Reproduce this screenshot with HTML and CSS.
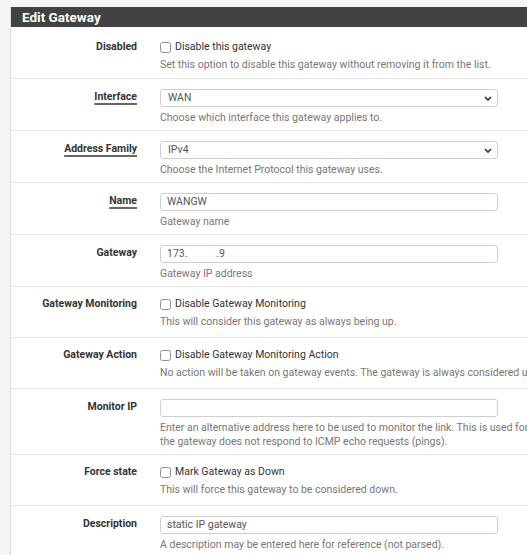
FILE: index.html
```html
<!DOCTYPE html>
<html>
<head>
<meta charset="utf-8">
<link rel="stylesheet" href="styles.css">
</head>
<body>
<div class="page">
  <div class="panel">
    <div class="panel-heading">Edit Gateway</div>
    <div class="panel-body">

      <div class="row row-check first">
        <div class="label">Disabled</div>
        <div class="field">
          <label class="check"><input type="checkbox"><span>Disable this gateway</span></label>
          <div class="help">Set this option to disable this gateway without removing it from the list.</div>
        </div>
      </div>

      <div class="row row-input">
        <div class="label"><span class="req">Interface</span></div>
        <div class="field">
          <div class="select">
            <span>WAN</span>
            <svg class="chev" width="8" height="5" viewBox="0 0 8 5"><path d="M1 1 L4 4 L7 1" fill="none" stroke="#333" stroke-width="1.7"/></svg>
          </div>
          <div class="help">Choose which interface this gateway applies to.</div>
        </div>
      </div>

      <div class="row row-input">
        <div class="label"><span class="req">Address Family</span></div>
        <div class="field">
          <div class="select">
            <span>IPv4</span>
            <svg class="chev" width="8" height="5" viewBox="0 0 8 5"><path d="M1 1 L4 4 L7 1" fill="none" stroke="#333" stroke-width="1.7"/></svg>
          </div>
          <div class="help">Choose the Internet Protocol this gateway uses.</div>
        </div>
      </div>

      <div class="row row-input">
        <div class="label"><span class="req">Name</span></div>
        <div class="field">
          <div class="input">WANGW</div>
          <div class="help">Gateway name</div>
        </div>
      </div>

      <div class="row row-input">
        <div class="label">Gateway</div>
        <div class="field">
          <div class="input">173.           .9</div>
          <div class="help">Gateway IP address</div>
        </div>
      </div>

      <div class="row row-check">
        <div class="label">Gateway Monitoring</div>
        <div class="field">
          <label class="check"><input type="checkbox"><span>Disable Gateway Monitoring</span></label>
          <div class="help">This will consider this gateway as always being up.</div>
        </div>
      </div>

      <div class="row row-check">
        <div class="label">Gateway Action</div>
        <div class="field">
          <label class="check"><input type="checkbox"><span>Disable Gateway Monitoring Action</span></label>
          <div class="help">No action will be taken on gateway events. The gateway is always considered up.</div>
        </div>
      </div>

      <div class="row row-input">
        <div class="label">Monitor IP</div>
        <div class="field">
          <div class="input"></div>
          <div class="help">Enter an alternative address here to be used to monitor the link. This is used for the quality RRD graphs as well as the load balancer entries. Use this if<br>the gateway does not respond to ICMP echo requests (pings).</div>
        </div>
      </div>

      <div class="row row-check">
        <div class="label">Force state</div>
        <div class="field">
          <label class="check"><input type="checkbox"><span>Mark Gateway as Down</span></label>
          <div class="help">This will force this gateway to be considered down.</div>
        </div>
      </div>

      <div class="row row-input">
        <div class="label">Description</div>
        <div class="field">
          <div class="input">static IP gateway</div>
          <div class="help">A description may be entered here for reference (not parsed).</div>
        </div>
      </div>

    </div>
  </div>
</div>
</body>
</html>
```
FILE: styles.css
```css
html, body {
  margin: 0;
  padding: 0;
  overflow: hidden;
  background: #f5f5f5;
}

body {
  font-family: Roboto, "Liberation Sans", sans-serif;
  font-size: 10.5px;
  color: #333;
}

.page {
  padding: 7px 0 0 10px;
}

.panel {
  width: 780px;
  background: #fff;
  border-left: 1px solid #dedede;
}

.panel-heading {
  height: 20px;
  line-height: 20px;
  background: #424242;
  color: #fff;
  font-weight: 700;
  font-size: 13.5px;
  padding-left: 11px;
}

.row {
  display: grid;
  grid-template-columns: 126px 1fr;
  column-gap: 23px;
  border-top: 1px solid #e6e6e6;
}

.row-check {
  padding: 9px 0 8px;
}

.row-check.first {
  border-top: none;
  padding: 12px 0 6px;
}

.row-input {
  padding: 10px 0 5px;
}

.label {
  text-align: right;
  font-weight: 700;
  line-height: 16px;
  white-space: nowrap;
}

.req {
  text-decoration: underline;
  text-decoration-color: #666;
  text-decoration-thickness: 1.5px;
  text-underline-offset: 2.5px;
}

.field {
  min-width: 0;
}

.check {
  display: flex;
  align-items: center;
  height: 16px;
  line-height: 16px;
}

.check input {
  width: 11px;
  height: 11px;
  margin: 0 4px 0 0;
  opacity: 0.8;
}

.select,
.input {
  box-sizing: border-box;
  width: 338px;
  height: 18px;
  border: 1px solid #cfcfcf;
  border-radius: 3px;
  padding: 0 5px 0 6px;
  line-height: 16px;
  color: #555;
  white-space: pre;
}

.select {
  display: flex;
  align-items: center;
  justify-content: space-between;
}

.select span {
  padding-left: 1px;
}

.chev {
  display: block;
}

.row-check .help {
  margin-top: 3px;
}

.row-input .help {
  margin-top: 4px;
}

.help {
  color: #777;
  line-height: 14px;
  white-space: nowrap;
}
```
